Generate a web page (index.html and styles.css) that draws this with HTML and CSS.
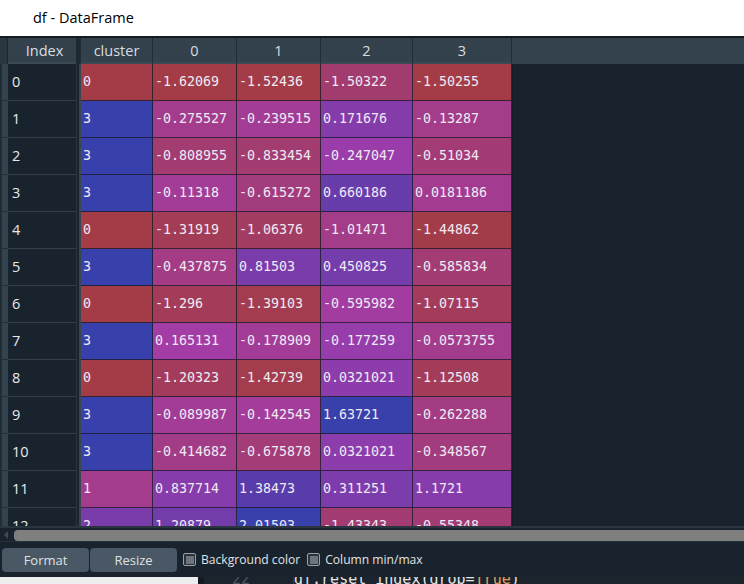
FILE: index.html
```html
<!DOCTYPE html>
<html>
<head>
<meta charset="utf-8">
<title>df - DataFrame</title>
<link rel="stylesheet" href="styles.css">
</head>
<body>
<div class="window">
  <div class="titlebar">df - DataFrame</div>
  <div class="viewer">
    <div class="grid hdr">
      <div class="strip"></div>
      <div class="hcell idx-h">Index</div>
      <div class="sep"></div>
      <div class="hcell">cluster</div>
      <div class="hcell">0</div>
      <div class="hcell">1</div>
      <div class="hcell">2</div>
      <div class="hcell">3</div>
      <div class="hfill"></div>
    </div>
    <div class="body">
      <div class="grid row"><div class="strip"></div><div class="idx">0</div><div class="sep"></div><div class="cell">0</div><div class="cell">-1.62069</div><div class="cell">-1.52436</div><div class="cell">-1.50322</div><div class="cell">-1.50255</div><div class="fill"></div></div>
      <div class="grid row"><div class="strip"></div><div class="idx">1</div><div class="sep"></div><div class="cell">3</div><div class="cell">-0.275527</div><div class="cell">-0.239515</div><div class="cell">0.171676</div><div class="cell">-0.13287</div><div class="fill"></div></div>
      <div class="grid row"><div class="strip"></div><div class="idx">2</div><div class="sep"></div><div class="cell">3</div><div class="cell">-0.808955</div><div class="cell">-0.833454</div><div class="cell">-0.247047</div><div class="cell">-0.51034</div><div class="fill"></div></div>
      <div class="grid row"><div class="strip"></div><div class="idx">3</div><div class="sep"></div><div class="cell">3</div><div class="cell">-0.11318</div><div class="cell">-0.615272</div><div class="cell">0.660186</div><div class="cell">0.0181186</div><div class="fill"></div></div>
      <div class="grid row"><div class="strip"></div><div class="idx">4</div><div class="sep"></div><div class="cell">0</div><div class="cell">-1.31919</div><div class="cell">-1.06376</div><div class="cell">-1.01471</div><div class="cell">-1.44862</div><div class="fill"></div></div>
      <div class="grid row"><div class="strip"></div><div class="idx">5</div><div class="sep"></div><div class="cell">3</div><div class="cell">-0.437875</div><div class="cell">0.81503</div><div class="cell">0.450825</div><div class="cell">-0.585834</div><div class="fill"></div></div>
      <div class="grid row"><div class="strip"></div><div class="idx">6</div><div class="sep"></div><div class="cell">0</div><div class="cell">-1.296</div><div class="cell">-1.39103</div><div class="cell">-0.595982</div><div class="cell">-1.07115</div><div class="fill"></div></div>
      <div class="grid row"><div class="strip"></div><div class="idx">7</div><div class="sep"></div><div class="cell">3</div><div class="cell">0.165131</div><div class="cell">-0.178909</div><div class="cell">-0.177259</div><div class="cell">-0.0573755</div><div class="fill"></div></div>
      <div class="grid row"><div class="strip"></div><div class="idx">8</div><div class="sep"></div><div class="cell">0</div><div class="cell">-1.20323</div><div class="cell">-1.42739</div><div class="cell">0.0321021</div><div class="cell">-1.12508</div><div class="fill"></div></div>
      <div class="grid row"><div class="strip"></div><div class="idx">9</div><div class="sep"></div><div class="cell">3</div><div class="cell">-0.089987</div><div class="cell">-0.142545</div><div class="cell">1.63721</div><div class="cell">-0.262288</div><div class="fill"></div></div>
      <div class="grid row"><div class="strip"></div><div class="idx">10</div><div class="sep"></div><div class="cell">3</div><div class="cell">-0.414682</div><div class="cell">-0.675878</div><div class="cell">0.0321021</div><div class="cell">-0.348567</div><div class="fill"></div></div>
      <div class="grid row"><div class="strip"></div><div class="idx">11</div><div class="sep"></div><div class="cell">1</div><div class="cell">0.837714</div><div class="cell">1.38473</div><div class="cell">0.311251</div><div class="cell">1.1721</div><div class="fill"></div></div>
      <div class="grid row"><div class="strip"></div><div class="idx">12</div><div class="sep"></div><div class="cell">2</div><div class="cell">1.20879</div><div class="cell">2.01503</div><div class="cell">-1.43343</div><div class="cell">-0.55348</div><div class="fill"></div></div>
    </div>
    <div class="hscroll">
      <div class="arrow"></div>
      <div class="thumb"></div>
    </div>
    <div class="toolbar">
      <div class="btn">Format</div>
      <div class="btn">Resize</div>
      <label class="check first"><span class="box"><span class="inner"></span></span>Background color</label>
      <label class="check"><span class="box"><span class="inner"></span></span>Column min/max</label>
    </div>
  </div>
  <div class="behind">
    <div class="light"></div>
    <div class="editor">
      <div class="gutter"><span class="lineno">22</span></div>
      <div class="code">df.reset_index(drop=<span class="kw">True</span>)</div>
    </div>
  </div>
</div>
<script src="script.js"></script>
</body>
</html>
```

FILE: styles.css
```css
html, body {
  margin: 0;
  padding: 0;
}
body {
  width: 744px;
  height: 584px;
  overflow: hidden;
  background: #19232d;
  font-family: "Open Sans", "Noto Sans", sans-serif;
}
.window {
  display: flex;
  flex-direction: column;
  height: 584px;
}
.titlebar {
  height: 36px;
  line-height: 35px;
  background: #ffffff;
  color: #000000;
  font-size: 14.5px;
  padding-left: 33px;
  flex: none;
}
.viewer {
  border-top: 2px solid #151c23;
  background: #19232d;
  display: flex;
  flex-direction: column;
  flex: none;
}
.grid {
  display: grid;
  grid-template-columns: 8px 68px 5px 72px 84px 84px 92px 99px 1fr;
}
.hdr {
  height: 26px;
  background: #32414b;
  border-bottom: 2px solid #3b4954;
  box-sizing: border-box;
}
.hdr .strip {
  background: #2a3640;
  border-right: 1px solid #1c262f;
}
.hcell {
  color: #dadde0;
  font-size: 14.5px;
  line-height: 26px;
  text-align: center;
  border-right: 1px solid #222d36;
}
.idx-h {
  padding-left: 5px;
  border-right: none;
}
.hdr .sep {
  background: #1e2831;
  border-right: 1px solid #222d36;
}
.hfill {
  background: #33424d;
}
.body {
  height: 462px;
  overflow: hidden;
}
.row {
  height: 37px;
}
.row .strip {
  background: #34424d;
  border-left: 2px solid #222c35;
  border-bottom: 1px solid #222c35;
}
.idx {
  background: #19232d;
  color: #e8e9eb;
  font-size: 14.5px;
  line-height: 36px;
  padding-left: 4px;
  border-bottom: 1px solid #343f49;
}
.row .sep {
  background: #19232d;
  border-left: 1px solid #2a353f;
  border-right: 2px solid #39464f;
}
.cell {
  font-family: "DejaVu Sans Mono", "Liberation Mono", monospace;
  font-size: 13.3px;
  color: #f0eaf4;
  line-height: 36px;
  padding-left: 2px;
  white-space: nowrap;
  overflow: hidden;
  border-right: 1px solid rgba(20, 24, 36, 0.75);
  border-bottom: 1px solid rgba(20, 24, 36, 0.75);
}
.fill {
  background: #19232d;
  border-left: 1px solid #141b22;
}
.hscroll {
  height: 15px;
  display: flex;
  align-items: flex-end;
  border-top: 2px solid #2a353f;
  box-sizing: border-box;
}
.arrow {
  width: 0;
  height: 0;
  margin: 0 6px 2px 4px;
  border-top: 4px solid transparent;
  border-bottom: 4px solid transparent;
  border-right: 4px solid #3d4a55;
}
.thumb {
  flex: 1;
  height: 11px;
  background: #7f7f7f;
  border-radius: 4px 0 0 4px;
}
.toolbar {
  height: 36px;
  display: flex;
  align-items: center;
  padding: 0 2px;
  box-sizing: border-box;
  border-top: 1px solid #263039;
}
.btn {
  width: 87px;
  height: 24px;
  line-height: 24px;
  text-align: center;
  background: #4a5764;
  color: #dfe2e5;
  font-size: 13px;
  border-radius: 4px;
  margin-right: 1px;
}
.check {
  display: flex;
  align-items: center;
  color: #e0e2e4;
  font-size: 12.1px;
  margin-left: 7px;
}
.check.first {
  margin-left: 5px;
}
.box {
  width: 13px;
  height: 13px;
  box-sizing: border-box;
  border: 1px solid #9aa0a6;
  border-radius: 2px;
  background: #2a333c;
  display: flex;
  align-items: center;
  justify-content: center;
  margin-right: 5px;
}
.inner {
  width: 8px;
  height: 8px;
  background: #6e747b;
}
.behind {
  flex: 1;
  display: flex;
  overflow: hidden;
}
.light {
  width: 198px;
  background: #eeeeee;
  flex: none;
}
.editor {
  flex: 1;
  display: flex;
  background: #1b232c;
  overflow: hidden;
  border-left: 6px solid #141a20;
}
.gutter {
  width: 89px;
  border-right: 1px solid #2b343d;
  flex: none;
  overflow: hidden;
}
.lineno {
  display: block;
  margin-top: -7px;
  padding-left: 28px;
  font-family: "DejaVu Sans Mono", monospace;
  font-size: 15px;
  color: #4c5660;
}
.code {
  margin-top: -7px;
  font-family: "DejaVu Sans Mono", "Liberation Mono", monospace;
  font-size: 15px;
  color: #e6e6e6;
  white-space: nowrap;
}
.kw {
  color: #e0a060;
}
```

FILE: script.js
```js
(function () {
  var ranges = [[0, 3], [-1.62069, 2.4], [-1.53, 2.015], [-2.23, 1.64], [-1.5, 2.88]];
  function hsv(h, s, v) {
    var i = Math.floor(h * 6), f = h * 6 - i;
    var p = v * (1 - s), q = v * (1 - f * s), t = v * (1 - (1 - f) * s);
    var r, g, b;
    switch (i % 6) {
      case 0: r = v; g = t; b = p; break;
      case 1: r = q; g = v; b = p; break;
      case 2: r = p; g = v; b = t; break;
      case 3: r = p; g = q; b = v; break;
      case 4: r = t; g = p; b = v; break;
      default: r = v; g = p; b = q;
    }
    return [Math.round(r * 255), Math.round(g * 255), Math.round(b * 255)];
  }
  var rows = document.querySelectorAll('.row');
  rows.forEach(function (row) {
    row.querySelectorAll('.cell').forEach(function (c, i) {
      var val = parseFloat(c.textContent);
      var mn = ranges[i][0], mx = ranges[i][1];
      var hue = 0.66 + 0.33 * (mx - val) / (mx - mn);
      hue = Math.min(Math.max(hue, 0.66), 0.99);
      var rgb = hsv(hue, 0.7, 1.0);
      c.style.backgroundColor = 'rgba(' + rgb[0] + ',' + rgb[1] + ',' + rgb[2] + ',0.6)';
    });
  });
})();
```
